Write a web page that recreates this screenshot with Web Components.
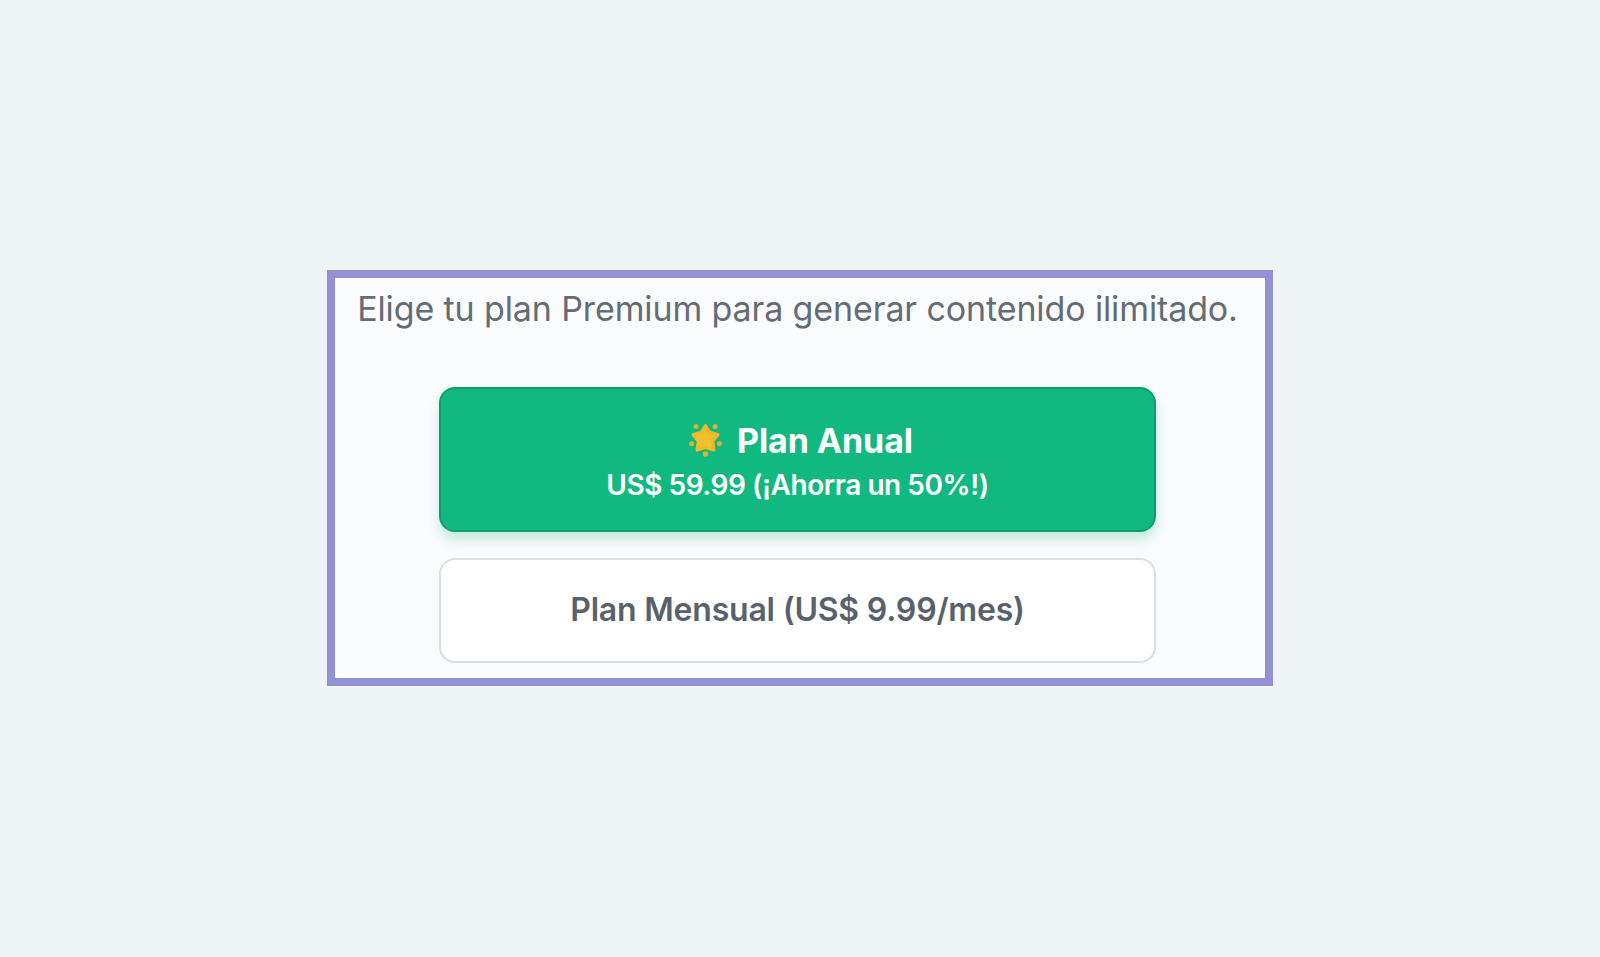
<!DOCTYPE html>
<html lang="es">
<head>
<meta charset="utf-8">
<title>Plan Premium</title>
<style>
  html, body { height: 100%; margin: 0; }
  body {
    display: flex;
    justify-content: center;
    align-items: center;
    box-sizing: border-box;
    padding-bottom: 1px;
    background: #eff4f7;
    font-family: Inter, "Liberation Sans", sans-serif;
  }
</style>
</head>
<body>

<plan-selector>
  <span slot="titulo">Elige tu plan Premium para generar contenido ilimitado.</span>
  <plan-button destacado>
    <star-icon slot="icono"></star-icon>
    <span>Plan Anual</span>
    <span slot="detalle">US$ 59.99 (¡Ahorra un 50%!)</span>
  </plan-button>
  <plan-button>Plan Mensual (US$ 9.99/mes)</plan-button>
</plan-selector>

<script>
class PlanSelector extends HTMLElement {
  constructor () {
    super();
    this.attachShadow({ mode: 'open' });
  }

  connectedCallback () {
    this.shadowRoot.innerHTML = `
    <style>
      :host {
        display: flex;
        flex-direction: column;
        align-items: center;
        box-sizing: border-box;
        width: 946px;
        height: 416px;
        padding: 11px 5px 0 0;
        border: 8px solid #9291d6;
        background: #fafbfd;
      }
      p {
        margin: 0 0 58px;
        font-size: 34px;
        line-height: 40px;
        letter-spacing: -.12px;
        white-space: nowrap;
        color: #666c74;
      }
      .planes {
        display: flex;
        flex-direction: column;
        gap: 26px;
        width: 717px;
      }
    </style>
    <p><slot name="titulo"></slot></p>
    <div class="planes"><slot></slot></div>
    `;
  }
}

class PlanButton extends HTMLElement {
  constructor () {
    super();
    this.attachShadow({ mode: 'open' });
  }

  connectedCallback () {
    this.shadowRoot.innerHTML = `
    <style>
      :host {
        display: block;
      }
      button {
        display: flex;
        flex-direction: column;
        align-items: center;
        justify-content: center;
        box-sizing: border-box;
        width: 100%;
        height: 105px;
        padding: 0 0 1px;
        border: 2px solid #dcdfe1;
        border-radius: 16px;
        background: #fff;
        color: #59626c;
        font: 600 32px/40px Inter, "Liberation Sans", sans-serif;
        letter-spacing: -.2px;
        white-space: nowrap;
      }
      .nombre {
        display: flex;
        align-items: center;
      }
      .detalle {
        display: none;
      }
      :host([destacado]) button {
        height: 145px;
        padding: 4px 0 0;
        border-color: #0b9f6c;
        background: #11b981;
        box-shadow: 0 8px 12px rgba(16, 185, 129, .22);
        color: #fff;
      }
      :host([destacado]) .nombre {
        padding: 0 0 1px 7px;
        font-size: 34px;
        font-weight: 700;
        line-height: 46px;
        letter-spacing: -.1px;
      }
      :host([destacado]) .detalle {
        display: block;
        font-size: 28px;
        line-height: 41px;
        letter-spacing: -.45px;
      }
    </style>
    <button type="button">
      <span class="nombre"><slot name="icono"></slot><slot></slot></span>
      <span class="detalle"><slot name="detalle"></slot></span>
    </button>
    `;
  }
}

class StarIcon extends HTMLElement {
  constructor () {
    super();
    this.attachShadow({ mode: 'open' });
  }

  connectedCallback () {
    this.shadowRoot.innerHTML = `
    <style>
      :host {
        display: block;
        width: 33px;
        height: 34px;
        margin: 0 15px 2px 0;
      }
      svg { display: block; }
    </style>
    <svg width="33" height="34" viewBox="0 0 33 34" aria-hidden="true">
      <path d="M16.5 2.8 L20.6 9.4 L28.8 11.6 L23.6 18.3 L24.8 27 L16.5 24.4 L8.2 27 L9.4 18.3 L4.2 11.6 L12.4 9.4 Z"
        fill="#f2bf2d" stroke="#f0b92b" stroke-width="3.4" stroke-linejoin="round"/>
      <g fill="#dcb22e">
        <circle cx="7" cy="3.4" r="2.5"/>
        <circle cx="26" cy="3.4" r="2.5"/>
        <circle cx="2.6" cy="20.8" r="2.5"/>
        <circle cx="30.4" cy="20.8" r="2.5"/>
        <circle cx="16.5" cy="31" r="2.7"/>
      </g>
    </svg>
    `;
  }
}

window.customElements.define('plan-selector', PlanSelector);
window.customElements.define('plan-button', PlanButton);
window.customElements.define('star-icon', StarIcon);
</script>
</body>
</html>
